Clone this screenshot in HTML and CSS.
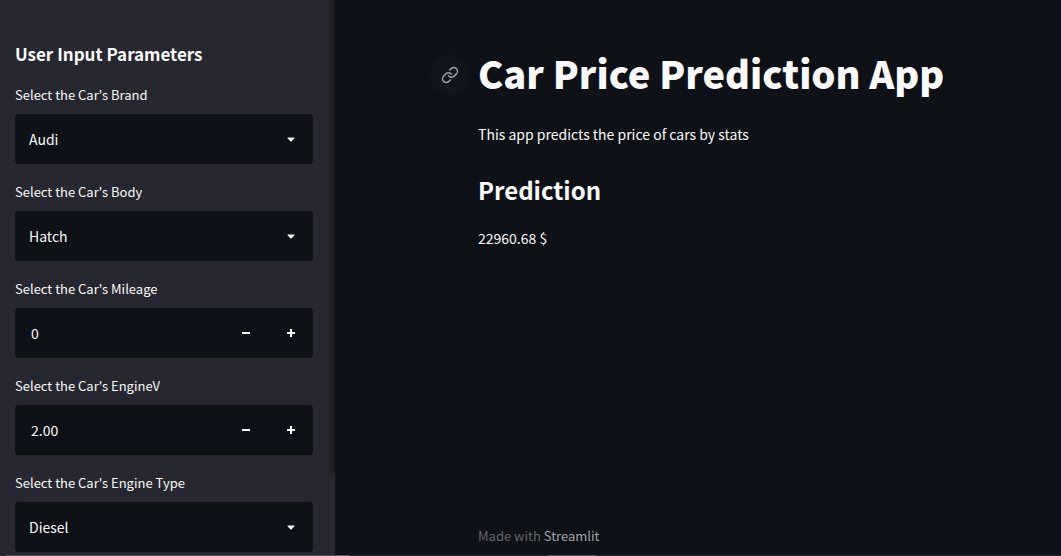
FILE: index.html
```html
<!DOCTYPE html>
<html lang="en">
<head>
<meta charset="utf-8">
<meta name="viewport" content="width=device-width, initial-scale=1">
<title>Car Price Prediction App</title>
<link rel="stylesheet" href="styles.css">
</head>
<body>
<svg class="symbols" aria-hidden="true">
  <symbol id="caret" viewBox="0 0 8 5"><path d="M1.2 .5h5.6c.7 0 .9.6.5 1L4.6 4.2c-.3.3-.9.3-1.2 0L.7 1.5c-.4-.4-.2-1 .5-1z" fill="currentColor"/></symbol>
  <symbol id="minus" viewBox="0 0 8 8"><path d="M0 3h8v2H0z" fill="currentColor"/></symbol>
  <symbol id="plus" viewBox="0 0 8 8"><path d="M0 3h3V0h2v3h3v2H5v3H3V5H0z" fill="currentColor"/></symbol>
</svg>
<div class="app">
  <aside class="sidebar">
    <form class="params">
      <h2 class="params-title">User Input Parameters</h2>
      <div class="field">
        <label class="label" for="brand">Select the Car's Brand</label>
        <div class="control">
          <select class="select" id="brand"><option>Audi</option></select>
          <svg class="caret"><use href="#caret"/></svg>
        </div>
      </div>
      <div class="field">
        <label class="label" for="body">Select the Car's Body</label>
        <div class="control">
          <select class="select" id="body"><option>Hatch</option></select>
          <svg class="caret"><use href="#caret"/></svg>
        </div>
      </div>
      <div class="field">
        <label class="label" for="mileage">Select the Car's Mileage</label>
        <div class="control">
          <input class="number" id="mileage" type="text" inputmode="numeric" value="0">
          <button class="step" type="button" aria-label="Decrease mileage"><svg class="sign"><use href="#minus"/></svg></button>
          <button class="step" type="button" aria-label="Increase mileage"><svg class="sign"><use href="#plus"/></svg></button>
        </div>
      </div>
      <div class="field">
        <label class="label" for="engine">Select the Car's EngineV</label>
        <div class="control">
          <input class="number" id="engine" type="text" inputmode="decimal" value="2.00">
          <button class="step" type="button" aria-label="Decrease engine volume"><svg class="sign"><use href="#minus"/></svg></button>
          <button class="step" type="button" aria-label="Increase engine volume"><svg class="sign"><use href="#plus"/></svg></button>
        </div>
      </div>
      <div class="field">
        <label class="label" for="type">Select the Car's Engine Type</label>
        <div class="control">
          <select class="select" id="type"><option>Diesel</option></select>
          <svg class="caret"><use href="#caret"/></svg>
        </div>
      </div>
    </form>
    <div class="scroll-thumb"></div>
  </aside>
  <main class="main">
    <h1 class="title" id="app-title">
      <a class="anchor" href="#app-title" aria-label="Link to this heading">
        <svg class="link-icon" viewBox="0 0 24 24"><path d="M10 13a5 5 0 0 0 7.54.54l3-3a5 5 0 0 0-7.07-7.07l-1.72 1.71M14 11a5 5 0 0 0-7.54-.54l-3 3a5 5 0 0 0 7.07 7.07l1.71-1.71"/></svg>
      </a>Car Price Prediction App</h1>
    <p class="text">This app predicts the price of cars by stats</p>
    <h2 class="subtitle">Prediction</h2>
    <p class="text">22960.68 $</p>
    <footer class="footer">Made with <a class="footer-link" href="#">Streamlit</a></footer>
  </main>
</div>
<div class="edge"></div>
</body>
</html>
```

FILE: styles.css
```css
* { box-sizing: border-box; }

body {
  margin: 0;
  background: #0e1117;
  color: #fafafa;
  font-family: "Noto Sans CJK SC", "Noto Sans", sans-serif;
  font-size: 14px;
  line-height: 24px;
}

h1, h2, p { margin: 0; }

.symbols { position: absolute; width: 0; height: 0; }

.app {
  display: flex;
  height: 100vh;
  overflow: hidden;
}

.sidebar {
  display: flex;
  flex: 0 0 335px;
  background: #262730;
}

.params {
  flex: 1;
  min-width: 0;
  padding: 42px 16px 0 15px;
}

.params-title {
  margin-bottom: 17px;
  font-size: 17px;
  font-weight: 700;
  line-height: 24px;
}

.field { margin-bottom: 16px; }

.label {
  display: block;
  margin-bottom: 7px;
  font-size: 13px;
  line-height: 24px;
}

.control {
  position: relative;
  display: flex;
  height: 50px;
  overflow: hidden;
  border-radius: 4px;
  background: #0e1117;
}

.select, .number, .step {
  margin: 0;
  border: 0;
  background: transparent;
  color: inherit;
  font: inherit;
}

.select {
  flex: 1;
  padding: 0 40px 0 14px;
  appearance: none;
}

.number {
  flex: 1;
  min-width: 0;
  padding: 0 16px;
}

.caret {
  position: absolute;
  top: 23px;
  right: 18px;
  width: 8px;
  height: 5px;
  pointer-events: none;
}

.step {
  display: flex;
  flex: 0 0 45px;
  align-items: center;
  justify-content: center;
  padding: 0;
}

.sign { width: 8px; height: 8px; }

.scroll-thumb {
  width: 6px;
  height: 475px;
  border-radius: 0 0 3px 3px;
  background: #202026;
}

.main {
  display: flex;
  flex: 1;
  flex-direction: column;
  min-width: 0;
  padding: 46px 16px 8px 143px;
}

.title {
  position: relative;
  margin-bottom: 22px;
  font-size: 38px;
  font-weight: 900;
  line-height: 54px;
}

.anchor {
  position: absolute;
  top: 9px;
  left: -48px;
  display: flex;
  align-items: center;
  justify-content: center;
  width: 40px;
  height: 40px;
  border-radius: 50%;
  background: #12151c;
  color: #9a9b9f;
}

.link-icon {
  width: 18px;
  height: 18px;
  fill: none;
  stroke: currentColor;
  stroke-width: 2;
  stroke-linecap: round;
  stroke-linejoin: round;
}

.subtitle {
  margin: 28px 0 20px;
  font-size: 24px;
  font-weight: 700;
  line-height: 32px;
}

.footer {
  margin-top: auto;
  color: #65676b;
  font-size: 13px;
}

.footer-link {
  color: #a5a6a9;
  text-decoration: none;
}

.edge {
  position: fixed;
  right: 0;
  bottom: 0;
  left: 0;
  height: 1px;
  background: linear-gradient(90deg, #262730 6px, #5c5c60 6px 350px, #232427 350px 548px, #55565a 548px 596px, #232427 596px);
}
```
